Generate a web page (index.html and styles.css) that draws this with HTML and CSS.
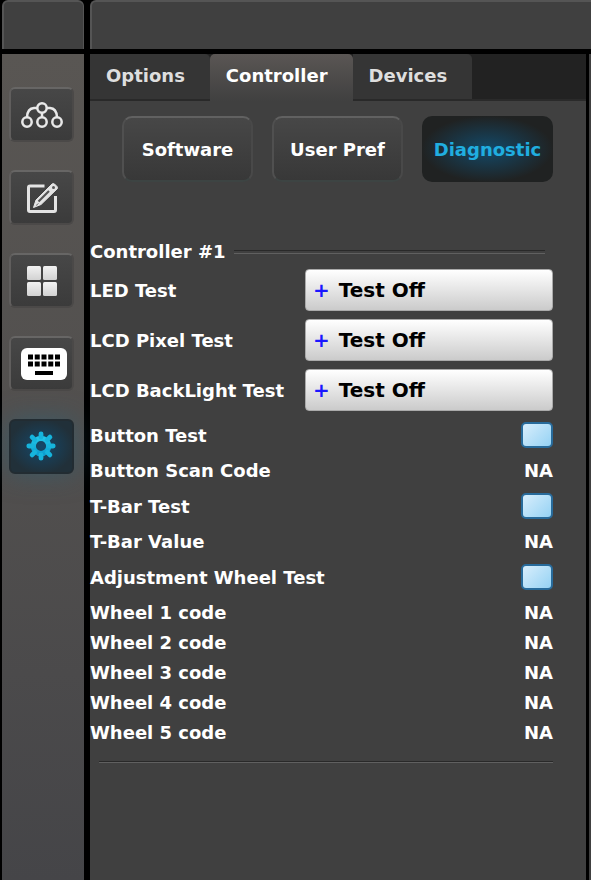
FILE: index.html
```html
<!DOCTYPE html>
<html lang="en">
<head>
<meta charset="utf-8">
<meta name="viewport" content="width=device-width, initial-scale=1">
<title>Controller diagnostic</title>
<link rel="stylesheet" href="styles.css">
</head>
<body>
<div class="app">
  <div class="header-cell"></div>
  <header class="header-cell"></header>

  <nav class="sidebar" aria-label="Sections">
    <button class="side-button" type="button" aria-label="Topology">
      <svg width="44" height="28" viewBox="0 0 44 28" fill="none" stroke="#e8e8e8" stroke-width="2.5">
        <circle cx="22" cy="7" r="4.7"/>
        <circle cx="7" cy="21" r="4.7"/>
        <circle cx="22" cy="21" r="4.7"/>
        <circle cx="37" cy="21" r="4.7"/>
        <path d="M17.500 7H14Q7.500 7.500 7 16M26.500 7H30Q36.500 7.500 37 16M22 12V16"/>
      </svg>
    </button>
    <button class="side-button" type="button" aria-label="Edit">
      <svg width="36" height="34" viewBox="0 0 36 34" fill="none" stroke="#e4e4e4">
        <path d="M20.500 5H6Q4.500 5 4.500 6.500V29Q4.500 30.500 6 30.500H30Q31.500 30.500 31.500 29V15" stroke-width="3"/>
        <path d="M9.500 26.500L12 19L28 3Q29.500 2 30.500 3L33 5.500Q34 7 33 8L17 23.500Z" fill="#e4e4e4" stroke-width="1" stroke-linejoin="round"/>
        <path d="M14.500 20.500L25 10" stroke="#555" stroke-width="2.200"/>
        <path d="M12 24.500L14.500 22.500" stroke="#777" stroke-width="1"/>
        <circle cx="29.500" cy="6.500" r="1.500" fill="#555" stroke="none"/>
      </svg>
    </button>
    <button class="side-button" type="button" aria-label="Layouts">
      <svg width="32" height="32" viewBox="0 0 32 32">
        <defs><linearGradient id="tile" x2="0" y2="1"><stop stop-color="#f2f2f2"/><stop offset="1" stop-color="#d2d2d2"/></linearGradient></defs>
        <g fill="url(#tile)">
          <rect x="1" y="1" width="14" height="14" rx="1.500"/><rect x="17" y="1" width="14" height="14" rx="1.500"/>
          <rect x="1" y="17" width="14" height="14" rx="1.500"/><rect x="17" y="17" width="14" height="14" rx="1.500"/>
        </g>
      </svg>
    </button>
    <button class="side-button" type="button" aria-label="Keyboard">
      <svg class="keyboard" width="50" height="32" viewBox="-4 0 50 32">
        <rect width="46" height="32" rx="6" fill="#fff"/>
        <path d="M7 9H39M7 16H39" stroke="#000" stroke-width="5" stroke-dasharray="5 1.750"/>
        <path d="M14 25H32" stroke="#000" stroke-width="4"/>
      </svg>
    </button>
    <button class="side-button side-button-active" type="button" aria-label="Settings" aria-current="page">
      <svg width="32" height="32" viewBox="-15 -15 32 32">
        <defs><linearGradient id="cog" x2="0" y2="1"><stop stop-color="#22c4e8"/><stop offset="1" stop-color="#0c9fd0"/></linearGradient></defs>
        <g fill="none" stroke="#16b4dc">
          <circle r="7.700" stroke="url(#cog)" stroke-width="5.200"/>
          <path d="M0-9V-12.200M0 9V12.200M-9 0H-12.200M9 0H12.200M6.400-6.400L8.900-8.900M-6.400 6.400L-8.900 8.900M-6.400-6.400L-8.900-8.900M6.400 6.400L8.900 8.900" stroke-width="4.800" stroke-linecap="round"/>
        </g>
      </svg>
    </button>
  </nav>

  <div class="workspace">
    <main class="panel">
      <div class="tabs" role="tablist">
        <button class="tab" type="button" role="tab" aria-selected="false">Options</button>
        <button class="tab tab-active" type="button" role="tab" aria-selected="true">Controller</button>
        <button class="tab" type="button" role="tab" aria-selected="false">Devices</button>
      </div>
      <div class="modes">
        <button class="mode" type="button">Software</button>
        <button class="mode" type="button">User Pref</button>
        <button class="mode mode-active" type="button">Diagnostic</button>
      </div>
      <section class="group">
        <h2 class="group-title">Controller #1</h2>
        <div class="tests">
          <div class="row"><label for="led">LED Test</label><button class="choice" id="led" type="button"><span class="plus">+</span><span>Test Off</span></button></div>
          <div class="row"><label for="pixel">LCD Pixel Test</label><button class="choice" id="pixel" type="button"><span class="plus">+</span><span>Test Off</span></button></div>
          <div class="row"><label for="backlight">LCD BackLight Test</label><button class="choice" id="backlight" type="button"><span class="plus">+</span><span>Test Off</span></button></div>
        </div>
        <div class="checks">
          <div class="row"><label for="button-test">Button Test</label><input class="check" id="button-test" type="checkbox"></div>
          <div class="row"><label for="scan">Button Scan Code</label><output id="scan">NA</output></div>
          <div class="row"><label for="tbar-test">T-Bar Test</label><input class="check" id="tbar-test" type="checkbox"></div>
          <div class="row"><label for="tbar">T-Bar Value</label><output id="tbar">NA</output></div>
          <div class="row"><label for="wheel-test">Adjustment Wheel Test</label><input class="check" id="wheel-test" type="checkbox"></div>
        </div>
        <div class="wheels">
          <div class="row"><label for="w1">Wheel 1 code</label><output id="w1">NA</output></div>
          <div class="row"><label for="w2">Wheel 2 code</label><output id="w2">NA</output></div>
          <div class="row"><label for="w3">Wheel 3 code</label><output id="w3">NA</output></div>
          <div class="row"><label for="w4">Wheel 4 code</label><output id="w4">NA</output></div>
          <div class="row"><label for="w5">Wheel 5 code</label><output id="w5">NA</output></div>
        </div>
        <hr class="rule">
      </section>
    </main>
    <aside class="edge"></aside>
  </div>
</div>
</body>
</html>
```

FILE: styles.css
```css
* {
  box-sizing: border-box;
}

body {
  margin: 0;
  background: #000;
  color: #fff;
  font: bold 18px/21px "DejaVu Sans", sans-serif;
}

button {
  margin: 0;
  padding: 0;
  border: 0;
  color: inherit;
  font: inherit;
}

.app {
  display: grid;
  grid-template-columns: 82px minmax(0, 1fr);
  grid-template-rows: 49px 1fr;
  gap: 5px 6px;
  min-height: 100vh;
  padding-left: 2px;
}

.header-cell {
  border: solid #555;
  border-width: 2px 1px 0 2px;
  border-radius: 6px 6px 0 0;
  background: #404040;
}

header.header-cell {
  border-right: 0;
  border-top-right-radius: 0;
}

.sidebar {
  display: flex;
  flex-direction: column;
  align-items: center;
  gap: 28px;
  padding: 33px 3px 0 0;
  background: linear-gradient(#595653, #514f4e 50%, #454548);
}

.side-button {
  display: flex;
  align-items: center;
  justify-content: center;
  width: 65px;
  height: 55px;
  border: 2px solid;
  border-color: #676665 #4b4948 #4b4948 #605e5d;
  border-radius: 6px;
  background: linear-gradient(#474747, #3b3b3b);
}

.keyboard {
  flex: none;
}

.side-button-active {
  border-color: #222c32;
  background: radial-gradient(#14486a, #213039 75%);
  box-shadow: 0 0 26px #28658080;
}

.workspace {
  display: grid;
  grid-template-columns: minmax(0, 1fr) 2px;
  gap: 3px;
}

.panel,
.edge {
  background: #404040;
}

.tabs {
  display: flex;
  height: 47px;
  background: #222;
  box-shadow: inset 0 -2px #2a2a2a;
}

.tab {
  padding: 0 25px 2px 16px;
  border-bottom: 2px solid #292929;
  border-radius: 0 5px 0 0;
  background: #353535;
  color: #dedede;
}

.tab-active {
  border-bottom: 0;
  border-radius: 5px 5px 0 0;
  padding-bottom: 4px;
  background: linear-gradient(#5a5654, #404040);
  color: #fff;
}

.modes {
  display: grid;
  grid-template-columns: repeat(3, 1fr);
  gap: 19px;
  padding: 15px 33px 0 32px;
}

.mode {
  height: 66px;
  border: 2px solid;
  border-color: #616161 #494949 #3d4443 #505050;
  border-radius: 10px;
  background: linear-gradient(#474747, #383838);
}

.mode-active {
  border-color: transparent;
  background: radial-gradient(closest-side, #134968, #202222) border-box;
  color: #20aee0;
}

.group {
  padding: 59px 33px 0 0;
}

.group-title {
  display: flex;
  align-items: center;
  gap: 8px;
  margin: 0;
  padding-right: 8px;
  font: inherit;
}

.group-title::after {
  flex: 1;
  height: 2px;
  border-top: 1px solid #292929;
  border-bottom: 1px solid #606060;
  content: "";
}

.tests,
.checks,
.wheels {
  display: grid;
}

.tests {
  gap: 8px;
  padding-top: 7px;
}

.checks {
  gap: 12px;
  padding-top: 11px;
}

.wheels {
  gap: 9px;
  padding-top: 12px;
}

.row {
  display: flex;
  align-items: center;
  justify-content: space-between;
}

.tests .row {
  display: grid;
  grid-template-columns: 215px 1fr;
}

.choice {
  display: flex;
  align-items: center;
  gap: 9px;
  height: 42px;
  padding: 0 7px;
  border: 1px solid #aaa;
  border-radius: 4px;
  background: linear-gradient(#fff, #cbcbcb);
  color: #000;
  font-size: 20px;
}

.plus {
  color: #1a16ff;
}

.check {
  width: 32px;
  height: 26px;
  margin: 0;
  border: 2px solid #286b9b;
  border-radius: 5px;
  background: linear-gradient(135deg, #d8eefc, #95d2f4);
  appearance: none;
}

.check:checked {
  background: #2a93d5;
}

.rule {
  height: 2px;
  margin: 18px 0 0 9px;
  border: solid #292929;
  border-width: 1px 0;
  border-bottom-color: #606060;
}
```
